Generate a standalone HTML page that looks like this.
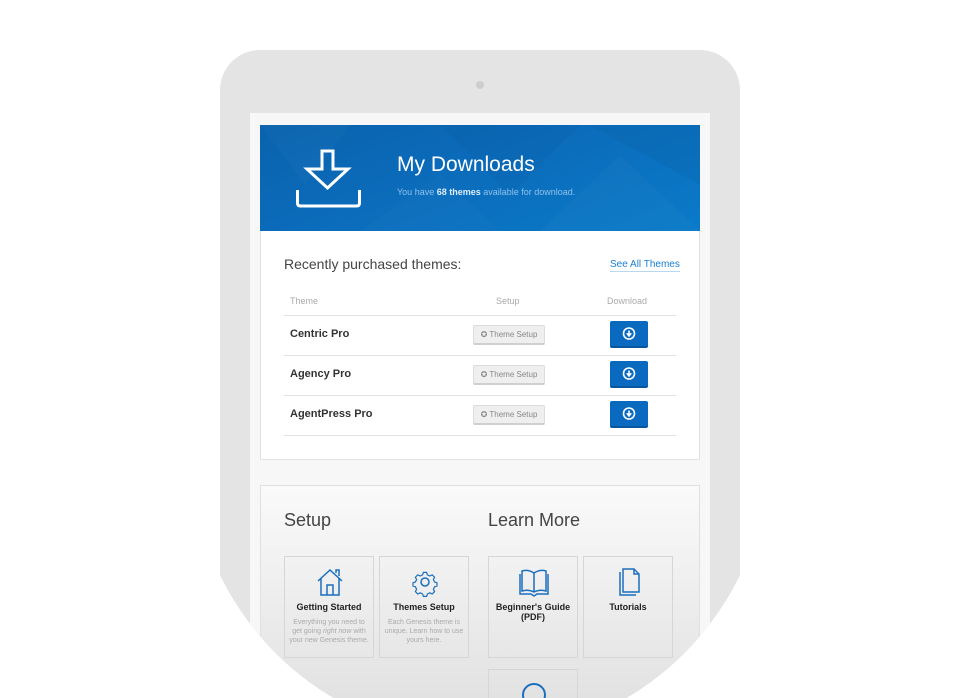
<!DOCTYPE html>
<html style="width:960px;height:698px;overflow:hidden"><head><meta charset="utf-8"><style>
*{margin:0;padding:0;box-sizing:border-box}
body{width:960px;height:698px;background:#fff;position:relative;overflow:hidden;font-family:"Liberation Sans",sans-serif}
#clip{position:absolute;left:0;top:0;width:960px;height:698px;overflow:hidden;clip-path:path('M220 50 H740 V575 A289 289 0 0 1 220 575 Z')}
#tab{position:absolute;left:220px;top:50px;width:520px;height:648px;background:#e4e4e4;border-radius:40px 40px 0 0}
#cam{position:absolute;left:476px;top:81px;width:8px;height:8px;border-radius:50%;background:#cdcdcd}
#scr{position:absolute;left:250px;top:113px;width:460px;height:585px;background:#f7f7f7}
#hdr{position:absolute;left:260px;top:125px;width:440px;height:106px;background:linear-gradient(160deg,#0a62ad 0%,#0b6cbb 45%,#0a7ac8 100%);overflow:hidden}
#card{position:absolute;left:260px;top:231px;width:440px;height:229px;background:#fff;border:1px solid #e2e2e2;border-top:none}
#card2{position:absolute;left:260px;top:485px;width:440px;height:213px;background:linear-gradient(#fafafa,#e2e2e2);border:1px solid #e0e0e0;border-bottom:none}
.t{position:absolute;white-space:nowrap}
.line{position:absolute;left:284px;width:392px;height:1px;background:#e3e3e3}
.sb{position:absolute;left:473px;width:72px;height:20px;background:#efefef;border:1px solid #dcdcdc;border-bottom:2px solid #cfcfcf;border-radius:2px;font-size:8px;color:#888;line-height:17px;text-align:center}
.db{position:absolute;left:610px;width:38px;height:27px;background:#0a6abf;border-radius:2px;border-bottom:2px solid #07579e}
.tile{position:absolute;width:90px;height:102px;border:1px solid #d6d6d6;text-align:center}
.tile b{position:absolute;left:0;right:0;top:45px;font-size:9px;color:#222}
.tile p{position:absolute;left:4px;right:4px;top:61px;font-size:7px;color:#aaa;line-height:9px}
</style></head><body>
<div id="clip">
<div id="tab"></div>
<div id="cam"></div>
<div id="scr"></div>
<div id="hdr">
<svg width="440" height="106" style="position:absolute;left:0;top:0">
<polygon points="0,0 90,0 45,60" fill="#fff" opacity=".025"/>
<polygon points="180,0 320,0 250,70" fill="#000" opacity=".03"/>
<polygon points="280,106 360,30 440,106" fill="#fff" opacity=".025"/>
<polygon points="330,0 440,0 440,60" fill="#000" opacity=".035"/>
<polygon points="100,106 180,50 240,106" fill="#fff" opacity=".02"/>
<g fill="none" stroke="#fff" stroke-width="3">
<path d="M62 26 H73 V44 H88 L67.5 63 L47 44 H62 Z" stroke-linejoin="miter"/>
<path d="M37.5 65 V78 Q37.5 81 40.5 81 H96.5 Q99.5 81 99.5 78 V65"/>
</g>
</svg>
<div class="t" style="left:137px;top:28px;font-size:21px;color:#fff">My Downloads</div>
<div class="t" style="left:137px;top:62px;font-size:9px;color:#8fc2ec">You have <b style="color:#dceefc">68 themes</b> available for download.</div>
</div>
<div id="card"></div>
<div class="t" style="left:284px;top:256px;font-size:14px;color:#444">Recently purchased themes:</div>
<div class="t" style="left:610px;top:259px;font-size:10px;color:#1a7fcf;border-bottom:1px solid #b8d8f0;padding-bottom:1px">See All Themes</div>
<div class="t" style="left:290px;top:296px;font-size:9px;color:#aaa">Theme</div>
<div class="t" style="left:496px;top:296px;font-size:9px;color:#aaa">Setup</div>
<div class="t" style="left:607px;top:296px;font-size:9px;color:#aaa">Download</div>
<div class="line" style="top:315px"></div>
<div class="line" style="top:355px"></div>
<div class="line" style="top:395px"></div>
<div class="line" style="top:435px"></div>
<div class="t" style="left:290px;top:328px;font-size:11px;font-weight:bold;color:#333">Centric Pro</div>
<div class="t" style="left:290px;top:368px;font-size:11px;font-weight:bold;color:#333">Agency Pro</div>
<div class="t" style="left:290px;top:408px;font-size:11px;font-weight:bold;color:#333">AgentPress Pro</div>
<div class="sb" style="top:325px">✪ Theme Setup</div>
<div class="sb" style="top:365px">✪ Theme Setup</div>
<div class="sb" style="top:405px">✪ Theme Setup</div>
<div class="db" style="top:321px"><svg width="38" height="25"><circle cx="19" cy="12.5" r="5.5" fill="none" stroke="#fff" stroke-width="1.6"/><path d="M19 9.5V14M16.8 12.3L19 15 21.2 12.3" stroke="#fff" stroke-width="1.6" fill="none"/></svg></div>
<div class="db" style="top:361px"><svg width="38" height="25"><circle cx="19" cy="12.5" r="5.5" fill="none" stroke="#fff" stroke-width="1.6"/><path d="M19 9.5V14M16.8 12.3L19 15 21.2 12.3" stroke="#fff" stroke-width="1.6" fill="none"/></svg></div>
<div class="db" style="top:401px"><svg width="38" height="25"><circle cx="19" cy="12.5" r="5.5" fill="none" stroke="#fff" stroke-width="1.6"/><path d="M19 9.5V14M16.8 12.3L19 15 21.2 12.3" stroke="#fff" stroke-width="1.6" fill="none"/></svg></div>
<div id="card2"></div>
<div class="t" style="left:284px;top:510px;font-size:18px;color:#444">Setup</div>
<div class="t" style="left:488px;top:510px;font-size:18px;color:#444">Learn More</div>
<div class="tile" style="left:284px;top:556px">
<svg width="30" height="30" style="position:absolute;left:30px;top:10px" fill="none" stroke="#1a6fbe" stroke-width="1.5"><path d="M3 14 L15 3 L27 14 M6 11 V28 H24 V11 M12 28 V18 H18 V28 M21 6 V3 H24 V9"/></svg>
<b>Getting Started</b><p>Everything you need to get going <i>right now</i> with your new Genesis theme.</p></div>
<div class="tile" style="left:379px;top:556px">
<svg width="30" height="30" style="position:absolute;left:30px;top:10px" fill="none" stroke="#1a6fbe" stroke-width="1.5"><circle cx="15" cy="15" r="4"/><path d="M13 3h4l1 3 3 1.5 3-1.5 3 3-1.5 3 1.5 3 3 1v4l-3 1-1.5 3 1.5 3-3 3-3-1.5-3 1.5-1 3h-4l-1-3-3-1.5-3 1.5-3-3 1.5-3-1.5-3-3-1v-4l3-1 1.5-3-1.5-3 3-3 3 1.5 3-1.5z" transform="translate(15 15) scale(.8) translate(-15 -15)"/></svg>
<b>Themes Setup</b><p>Each Genesis theme is unique. Learn how to use yours here.</p></div>
<div class="tile" style="left:488px;top:556px">
<svg width="32" height="30" style="position:absolute;left:29px;top:10px" fill="none" stroke="#1a6fbe" stroke-width="1.5"><path d="M16 6 Q10 2 4 4 V24 Q10 22 16 25 Q22 22 28 24 V4 Q22 2 16 6 Z M16 6 V25 M2 7 V27 H13 L16 29 L19 27 H30 V7"/></svg>
<b>Beginner's Guide<br>(PDF)</b></div>
<div class="tile" style="left:583px;top:556px">
<svg width="30" height="30" style="position:absolute;left:30px;top:10px" fill="none" stroke="#1a6fbe" stroke-width="1.5"><path d="M9 2 H20 L25 7 V25 H9 Z M20 2 V7 H25 M6 5 V28 H22"/></svg>
<b>Tutorials</b></div>
<div class="tile" style="left:488px;top:669px">
<svg width="30" height="30" style="position:absolute;left:30px;top:10px" fill="none" stroke="#1a6fbe" stroke-width="2"><circle cx="15" cy="15" r="11"/></svg></div>
</div>
</body></html>
